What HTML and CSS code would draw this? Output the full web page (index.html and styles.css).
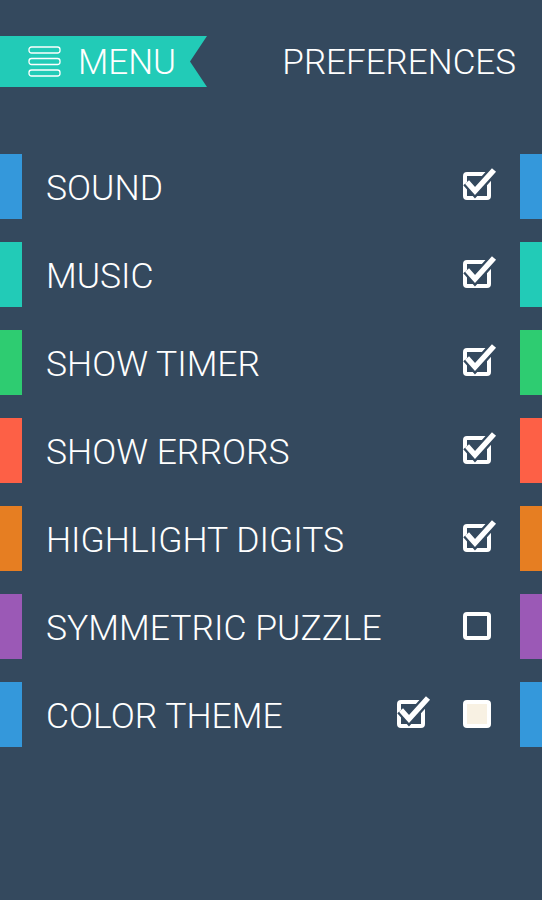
FILE: index.html
```html
<!DOCTYPE html>
<html lang="en">
<head>
  <meta charset="UTF-8">
  <title>Preferences</title>
  <link rel="stylesheet" href="styles.css">
</head>
<body>
  <header class="top-bar">
    <div class="menu-ribbon">
      <svg class="menu-icon" width="33" height="31" viewBox="0 0 33 31">
        <rect x="1" y="1" width="31" height="6" rx="2.5" />
        <rect x="1" y="12.5" width="31" height="6" rx="2.5" />
        <rect x="1" y="24" width="31" height="6" rx="2.5" />
      </svg>
      <span class="menu-text">MENU</span>
    </div>
    <div class="page-title">PREFERENCES</div>
  </header>

  <ul class="pref-list">
    <li class="pref-row blue">
      <span class="bar"></span>
      <span class="label">SOUND</span>
      <svg class="box checked" viewBox="0 0 34 34"><rect x="2" y="6" width="24" height="24" /><polyline class="gap" points="4,14 12,23 31,2" /><polyline class="tick" points="4,14 12,23 31,2" /></svg>
      <span class="bar"></span>
    </li>
    <li class="pref-row teal">
      <span class="bar"></span>
      <span class="label">MUSIC</span>
      <svg class="box checked" viewBox="0 0 34 34"><rect x="2" y="6" width="24" height="24" /><polyline class="gap" points="4,14 12,23 31,2" /><polyline class="tick" points="4,14 12,23 31,2" /></svg>
      <span class="bar"></span>
    </li>
    <li class="pref-row green">
      <span class="bar"></span>
      <span class="label">SHOW TIMER</span>
      <svg class="box checked" viewBox="0 0 34 34"><rect x="2" y="6" width="24" height="24" /><polyline class="gap" points="4,14 12,23 31,2" /><polyline class="tick" points="4,14 12,23 31,2" /></svg>
      <span class="bar"></span>
    </li>
    <li class="pref-row red">
      <span class="bar"></span>
      <span class="label">SHOW ERRORS</span>
      <svg class="box checked" viewBox="0 0 34 34"><rect x="2" y="6" width="24" height="24" /><polyline class="gap" points="4,14 12,23 31,2" /><polyline class="tick" points="4,14 12,23 31,2" /></svg>
      <span class="bar"></span>
    </li>
    <li class="pref-row orange">
      <span class="bar"></span>
      <span class="label">HIGHLIGHT DIGITS</span>
      <svg class="box checked" viewBox="0 0 34 34"><rect x="2" y="6" width="24" height="24" /><polyline class="gap" points="4,14 12,23 31,2" /><polyline class="tick" points="4,14 12,23 31,2" /></svg>
      <span class="bar"></span>
    </li>
    <li class="pref-row purple">
      <span class="bar"></span>
      <span class="label">SYMMETRIC PUZZLE</span>
      <svg class="box" viewBox="0 0 34 34"><rect x="2" y="6" width="24" height="24" /></svg>
      <span class="bar"></span>
    </li>
    <li class="pref-row blue">
      <span class="bar"></span>
      <span class="label">COLOR THEME</span>
      <svg class="box checked theme-check" viewBox="0 0 34 34"><rect x="2" y="6" width="24" height="24" /><polyline class="gap" points="4,14 12,23 31,2" /><polyline class="tick" points="4,14 12,23 31,2" /></svg>
      <svg class="box swatch" viewBox="0 0 34 34"><rect x="2" y="6" width="24" height="24" /></svg>
      <span class="bar"></span>
    </li>
  </ul>
</body>
</html>
```

FILE: styles.css
```css
body {
  margin: 0;
  padding: 0;
  background: #34495e;
  color: #ffffff;
  font-family: "Roboto Light", Roboto, "Noto Sans", sans-serif;
  font-weight: 300;
  width: 542px;
  height: 900px;
  overflow: hidden;
}

.top-bar {
  display: flex;
  justify-content: space-between;
  align-items: center;
  padding-top: 36px;
}

.menu-ribbon {
  display: flex;
  align-items: center;
  width: 207px;
  height: 51px;
  background: #22cbb7;
  clip-path: polygon(0 0, 100% 0, 190px 50%, 100% 100%, 0 100%);
  box-sizing: border-box;
  padding-left: 28px;
}

.menu-icon rect {
  fill: none;
  stroke: #ffffff;
  stroke-width: 1.3;
}

.menu-text {
  font-size: 35px;
  margin-left: 17px;
  line-height: 1;
  padding-top: 1px;
}

.page-title {
  font-size: 35px;
  line-height: 1;
  padding-right: 26px;
  padding-top: 1px;
}

.pref-list {
  list-style: none;
  margin: 67px 0 0 0;
  padding: 0;
}

.pref-row {
  display: flex;
  align-items: center;
  height: 65px;
  margin-bottom: 23px;
}

.pref-row .bar {
  width: 22px;
  height: 65px;
  flex-shrink: 0;
}

.blue .bar { background: #3498db; }
.teal .bar { background: #22cbb7; }
.green .bar { background: #2ecc71; }
.red .bar { background: #fd6046; }
.orange .bar { background: #e67e22; }
.purple .bar { background: #9b59b6; }

.label {
  flex: 1;
  font-size: 35.5px;
  margin-left: 24px;
  line-height: 1;
  padding-top: 5px;
}

.box {
  width: 34px;
  height: 34px;
  margin-right: 23px;
  margin-top: -3px;
}

.box rect {
  fill: none;
  stroke: #ffffff;
  stroke-width: 4;
  rx: 2;
}

.box .gap {
  fill: none;
  stroke: #34495e;
  stroke-width: 10;
  stroke-linejoin: miter;
}

.box .tick {
  fill: none;
  stroke: #ffffff;
  stroke-width: 5.5;
  stroke-linejoin: miter;
}

.theme-check {
  margin-right: 32px;
}

.swatch rect {
  fill: #f8f1e3;
}
```
